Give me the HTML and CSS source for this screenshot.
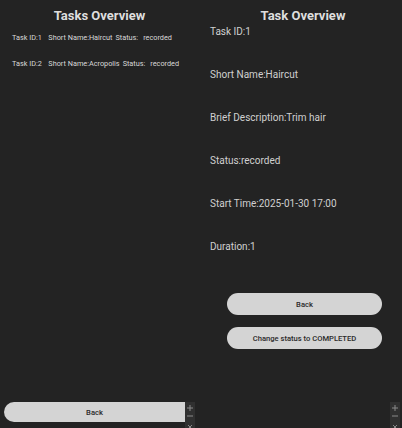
FILE: index.html
```html
<!DOCTYPE html>
<html>
<head>
<meta charset="utf-8">
<link rel="stylesheet" href="styles.css">
</head>
<body>
<div class="screen">
  <section class="panel left">
    <h1 class="title">Tasks Overview</h1>
    <div class="list">
      <div class="row"><span class="c1">Task ID:1</span><span class="c2">Short Name:Haircut</span><span class="c3">Status:</span><span>recorded</span></div>
      <div class="row"><span class="c1">Task ID:2</span><span class="c2">Short Name:Acropolis</span><span class="c3">Status:</span><span>recorded</span></div>
    </div>
    <div class="bottom">
      <button class="btn wide">Back</button>
    </div>
    <div class="zoomctl">
      <svg width="10" height="26" viewBox="0 0 10 26"><path d="M5 3v6M2 6h6M2 14h6M3 23l4 4M7 23l-4 4" stroke="#8a8a8a" stroke-width="1" fill="none"/></svg>
    </div>
  </section>
  <section class="panel right">
    <h1 class="title">Task Overview</h1>
    <div class="fields">
      <p class="field">Task ID:1</p>
      <p class="field">Short Name:Haircut</p>
      <p class="field">Brief Description:Trim hair</p>
      <p class="field">Status:recorded</p>
      <p class="field">Start Time:2025-01-30 17:00</p>
      <p class="field">Duration:1</p>
    </div>
    <div class="actions">
      <button class="btn">Back</button>
      <button class="btn">Change status to COMPLETED</button>
    </div>
    <div class="zoomctl">
      <svg width="10" height="26" viewBox="0 0 10 26"><path d="M5 3v6M2 6h6M2 14h6M3 23l4 4M7 23l-4 4" stroke="#8a8a8a" stroke-width="1" fill="none"/></svg>
    </div>
  </section>
</div>
</body>
</html>
```
FILE: styles.css
```css
html, body {
  margin: 0;
  padding: 0;
  background: #232323;
}
body {
  font-family: Roboto, "Noto Sans", sans-serif;
  color: #d0d0d0;
  width: 402px;
  height: 428px;
  overflow: hidden;
}
.screen {
  display: grid;
  grid-template-columns: 201px 201px;
  height: 428px;
}
.panel {
  position: relative;
  display: flex;
  flex-direction: column;
  height: 428px;
}
.title {
  margin: 0;
  padding-top: 8px;
  font-size: 13px;
  font-weight: bold;
  line-height: 16px;
  text-align: center;
  color: #dedede;
}
.left .title { padding-right: 2px; }
.right .title { padding-left: 3px; }
.list {
  display: flex;
  flex-direction: column;
  gap: 16px;
  padding: 9px 0 0 12px;
}
.row {
  font-size: 7.3px;
  line-height: 10px;
  white-space: nowrap;
  color: #d8d8d8;
}
.c1 { margin-right: 6.5px; }
.c2 { margin-right: 3px; }
.c3 { margin-right: 5px; }
.bottom {
  margin-top: auto;
  padding: 0 16px 6px 4px;
}
.btn {
  display: block;
  width: 100%;
  border: none;
  background: #d4d4d4;
  color: #2a2a2a;
  font-family: Roboto, "Noto Sans", sans-serif;
  font-size: 7.6px;
  font-weight: 500;
  border-radius: 11px;
  padding: 0;
}
.wide { height: 20px; border-radius: 10px 0 0 10px; }
.fields {
  display: flex;
  flex-direction: column;
  gap: 30px;
  padding: 1px 0 0 9px;
}
.field {
  margin: 0;
  font-size: 10px;
  line-height: 13px;
}
.actions {
  display: flex;
  flex-direction: column;
  gap: 12px;
  padding: 40px 20px 0 26px;
}
.actions .btn { height: 22px; }
.zoomctl {
  position: absolute;
  right: 6px;
  bottom: 0;
  width: 10px;
  height: 26px;
  background: #303030;
  display: flex;
}
.right .zoomctl { right: 2px; }
```
